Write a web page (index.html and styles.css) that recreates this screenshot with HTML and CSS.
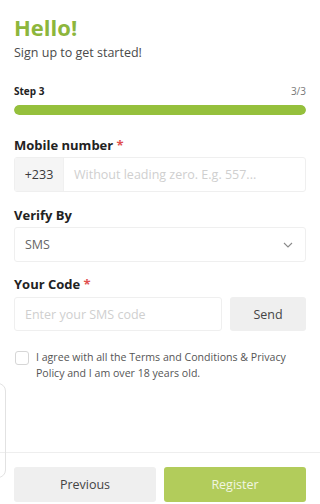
FILE: index.html
```html
<!DOCTYPE html>
<html>
<head>
<meta charset="utf-8">
<link rel="stylesheet" href="styles.css">
</head>
<body>
<div class="ghost"></div>
<main class="form">
  <h1 class="title">Hello!</h1>
  <p class="subtitle">Sign up to get started!</p>
  <div class="step-row"><span class="step">Step 3</span><span class="count">3/3</span></div>
  <div class="progress"><div class="progress-fill"></div></div>

  <label class="label">Mobile number <span class="req">*</span></label>
  <div class="field phone">
    <span class="prefix">+233</span>
    <span class="placeholder">Without leading zero. E.g. 557...</span>
  </div>

  <label class="label">Verify By</label>
  <div class="field select">
    <span class="value">SMS</span>
    <svg class="chev" width="10" height="6" viewBox="0 0 10 6"><path d="M1 1 L5 5 L9 1" fill="none" stroke="#8a8a8a" stroke-width="1.1"/></svg>
  </div>

  <label class="label">Your Code <span class="req">*</span></label>
  <div class="code-row">
    <div class="field code"><span class="placeholder">Enter your SMS code</span></div>
    <button class="send">Send</button>
  </div>

  <div class="agree">
    <span class="box"></span>
    <p class="agree-text">I agree with all the Terms and Conditions &amp; Privacy Policy and I am over 18 years old.</p>
  </div>
</main>
<footer class="footer">
  <button class="btn prev">Previous</button>
  <button class="btn reg">Register</button>
</footer>
</body>
</html>
```
FILE: styles.css
```css
* { box-sizing: border-box; }
html, body { margin: 0; padding: 0; background: #fff; }
body {
  font-family: "Open Sans", "Noto Sans", sans-serif;
  color: #333;
  width: 320px;
  height: 504px;
  overflow: hidden;
  position: relative;
}
.ghost {
  position: absolute;
  left: -20px;
  top: 383px;
  width: 26px;
  height: 95px;
  border: 1px solid #e2e2e2;
  border-radius: 8px;
}
.form { padding: 12px 14px 0; }
.title {
  margin: 0;
  font-size: 22px;
  line-height: 30px;
  font-weight: 700;
  color: #8db63c;
}
.subtitle {
  margin: 3px 0 0;
  font-size: 12.5px;
  line-height: 16px;
  color: #4a4a4a;
}
.step-row {
  margin-top: 23px;
  display: flex;
  justify-content: space-between;
  font-size: 10px;
  line-height: 14px;
}
.step { font-weight: 700; color: #222; }
.count { color: #777; }
.progress {
  margin-top: 7px;
  height: 10px;
  border-radius: 5px;
  background: #eee;
  overflow: hidden;
}
.progress-fill { width: 100%; height: 100%; background: #95c03c; border-radius: 5px; }
.label {
  display: block;
  font-size: 13px;
  line-height: 18px;
  font-weight: 700;
  color: #222;
  margin-top: 21px;
}
.req { color: #e0504f; font-weight: 700; }
.field {
  margin-top: 3px;
  height: 35px;
  border: 1px solid #efefef;
  border-radius: 3px;
  display: flex;
  align-items: center;
  font-size: 12.5px;
}
.phone { overflow: hidden; }
.prefix {
  width: 49px;
  height: 100%;
  background: #f5f5f5;
  display: flex;
  align-items: center;
  justify-content: center;
  color: #3a3a3a;
  border-right: 1px solid #f0f0f0;
}
.placeholder { color: #cfcfcf; padding-left: 10px; }
.label:nth-of-type(2) { margin-top: 14px; }
.select { justify-content: space-between; padding: 0 12px 0 10px; }
.value { color: #666; }
.chev { display: block; }
.label:nth-of-type(3) { margin-top: 13px; }
.code-row {
  margin-top: 4px;
  display: flex;
  gap: 8px;
}
.code { margin-top: 0; flex: 1; height: 34px; }
.send {
  width: 76px;
  height: 34px;
  border: none;
  border-radius: 3px;
  background: #efefef;
  font-family: inherit;
  font-size: 12.5px;
  color: #444;
}
.agree {
  margin-top: 18px;
  display: flex;
  align-items: flex-start;
  gap: 7px;
}
.box {
  flex: none;
  width: 14px;
  height: 14px;
  margin: 2px 0 0 1px;
  border: 1px solid #d6d6d6;
  border-radius: 3px;
}
.agree-text {
  margin: 0;
  font-size: 10.6px;
  line-height: 16px;
  color: #555;
}
.footer {
  margin-top: 71px;
  border-top: 1px solid #eeeeee;
  padding: 14px 14px 0;
  display: flex;
  gap: 8px;
}
.btn {
  flex: 1;
  height: 35px;
  border: none;
  border-radius: 3px;
  font-family: inherit;
  font-size: 12.5px;
}
.prev { background: #efefef; color: #444; }
.reg { background: #b2cc5b; color: #f1f6e2; }
```
